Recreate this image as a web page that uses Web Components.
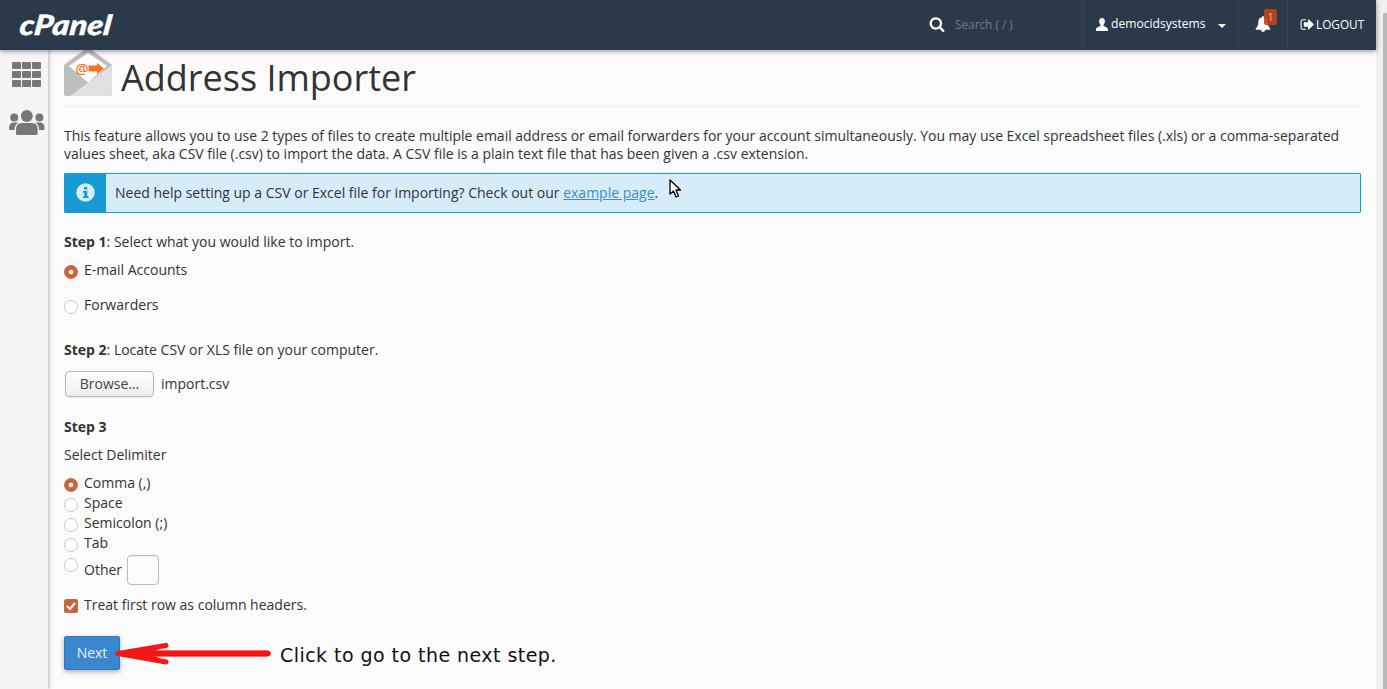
<!DOCTYPE html>
<html lang="en"><head><meta charset="utf-8"><title>Address Importer</title>
<style>
html,body{margin:0;padding:0;height:689px;overflow:hidden;background:#fafafa;font:14px/20px "Open Sans",sans-serif;color:#333}
</style></head><body>
<cp-app>
  <cp-row style="margin-top:19px"><b>Step 1</b>: Select what you would like to import.</cp-row>
  <cp-radio checked style="margin-top:8px">E-mail Accounts</cp-radio>
  <cp-radio style="margin-top:15px">Forwarders</cp-radio>
  <cp-row style="margin-top:25px"><b>Step 2</b>: Locate CSV or XLS file on your computer.</cp-row>
  <cp-file style="margin-top:11px" name="import.csv"></cp-file>
  <cp-row style="margin-top:20px"><b>Step 3</b></cp-row>
  <cp-row style="margin-top:8px">Select Delimiter</cp-row>
  <cp-radio checked style="margin-top:8px">Comma (,)</cp-radio>
  <cp-radio>Space</cp-radio>
  <cp-radio>Semicolon (;)</cp-radio>
  <cp-radio>Tab</cp-radio>
  <cp-radio other style="margin-top:2px">Other</cp-radio>
  <cp-check checked style="margin-top:10px">Treat first row as column headers.</cp-check>
  <cp-button style="margin-top:21px">Next</cp-button>
</cp-app>
<script>
const fa={
search:'<svg viewBox="0 0 1792 1792" width="16" height="16" fill="#fff"><path d="M1216 832q0-185-131.500-316.500t-316.500-131.500-316.500 131.500-131.500 316.500 131.500 316.500 316.500 131.500 316.500-131.500 131.500-316.500zm512 832q0 52-38 90t-90 38q-54 0-90-38l-343-342q-179 124-399 124-143 0-273.500-55.500t-225-150-150-225-55.500-273.500 55.500-273.500 150-225 225-150 273.500-55.500 273.500 55.500 225 150 150 225 55.500 273.500q0 220-124 399l343 343q37 37 37 90z"/></svg>',
user:'<svg viewBox="0 0 12 13" width="12" height="13" fill="#fff"><path d="M6 0C7.900 0 8.900 1.300 8.900 3.200C8.900 4.800 8.200 6 7.500 6.800V8C8.500 8.700 12 9.300 12 11.400V13H0V11.400C0 9.300 3.500 8.700 4.500 8V6.800C3.800 6 3.100 4.800 3.100 3.200C3.100 1.300 4.100 0 6 0Z"/></svg>',
bell:'<svg viewBox="0 0 1792 1792" width="16" height="16" fill="#fff"><path d="M912 1696q0-16-16-16-59 0-101.500-42.500t-42.500-101.500q0-16-16-16t-16 16q0 73 51.500 124.500t124.500 51.500q16 0 16-16zm816-288q0 52-38 90t-90 38h-448q0 106-75 181t-181 75-181-75-75-181h-448q-52 0-90-38t-38-90q50-42 91-88t85-119.500 74.500-158.500 50-206 19.500-260q0-152 117-282.500t307-158.500q-8-19-8-39 0-40 28-68t68-28 68 28 28 68q0 20-8 39 190 28 307 158.500t117 282.500q0 139 19.500 260t50 206 74.500 158.500 85 119.500 91 88z"/></svg>',
out:'<svg viewBox="0 0 1792 1792" width="15" height="15" fill="#fff"><path d="M704 1440q0 4 1 20t.5 26.500-3 23.500-10 19.500-20.500 6.500h-320q-119 0-203.500-84.500t-84.500-203.500v-704q0-119 84.500-203.500t203.500-84.500h320q13 0 22.500 9.500t9.500 22.500q0 4 1 20t.5 26.500-3 23.500-10 19.500-20.500 6.500h-320q-66 0-113 47t-47 113v704q0 66 47 113t113 47h312l11.500 1 11.500 3 8 5.500 7 9 2 13.500zm928-544q0 26-19 45l-544 544q-19 19-45 19t-45-19-19-45v-288h-448q-26 0-45-19t-19-45v-384q0-26 19-45t45-19h448v-288q0-26 19-45t45-19 45 19l544 544q19 19 19 45z"/></svg>',
users:'<svg viewBox="0 0 36 26" width="36" height="26" fill="#777"><circle cx="17.800" cy="6" r="6"/><circle cx="5.200" cy="7.500" r="4"/><circle cx="30.400" cy="7.500" r="4"/><path d="M7 23.500V19Q7 13 13 13H22.600Q28.600 13 28.600 19V23.500Q28.600 25 27 25H8.500Q7 25 7 23.500Z"/><path d="M0 18.500Q0 12.500 4.500 12.500H9.500Q5.500 14.500 5.400 20H1.200Q0 20 0 18.500Z"/><path d="M35.600 18.500Q35.600 12.500 31.100 12.500H26.100Q30.100 14.500 30.200 20H34.400Q35.600 20 35.600 18.500Z"/></svg>'
};
function def(name,html){
  customElements.define(name,class extends HTMLElement{
    constructor(){super();this.attachShadow({mode:'open'}).innerHTML=typeof html==='function'?html(this):html;}
  });
}
def('cp-header',`<style>
:host{display:flex;align-items:stretch;height:50px;background:#2a3a4b;color:#fff;box-shadow:0 1px 5px rgba(0,0,0,.45);position:relative;z-index:3;font:12px/20px "Open Sans",sans-serif}
.logo{font:italic 900 28px/48px Lato,sans-serif;margin-left:20px;letter-spacing:.1px;transform:scaleX(1.16) skewX(-6deg);transform-origin:0 50%;color:#fff;height:50px;-webkit-text-stroke:.4px #fff}
.sp{flex:1}
.search{display:flex;align-items:center;width:154px;box-sizing:border-box;padding-bottom:2px}
.search span{margin-left:10px;color:#727d88;font-size:11.800px}
.cell{display:flex;align-items:center;border-left:1px solid #34465a;box-sizing:border-box;padding-bottom:2px}
.user{width:155px;padding-left:12px}
.user span{margin-left:3px;font-size:12.100px}
.caret{width:0;height:0;border:4px solid transparent;border-top-color:#fff;border-bottom:0;margin-left:12px;margin-top:3px}
.bell{width:49px;padding-left:16px;position:relative}
.badge{position:absolute;left:25px;top:9px;width:13px;height:16px;background:rgba(190,68,22,.92);border-radius:2px;font-size:10px;line-height:16px;text-align:center;color:#d9c9c2}
.out{width:89px;padding-left:12px}
.out span{margin-left:1px;font-size:11.800px}
</style><div class="logo">cPanel</div><div class="sp"></div>
<div class="search">${fa.search}<span>Search ( / )</span></div>
<div class="cell user">${fa.user}<span>democidsystems</span><i class="caret"></i></div>
<div class="cell bell">${fa.bell}<div class="badge">1</div></div>
<div class="cell out">${fa.out}<span>LOGOUT</span></div>`);
def('cp-sidebar',`<style>
:host{display:flex;flex-direction:column;align-items:flex-start;width:48px;flex:none;background:#f5f5f5;box-shadow:1px 0 4px rgba(0,0,0,.28);position:relative;z-index:2;box-sizing:border-box;padding:12px 0 0 9px}
.grid{display:grid;grid-template-columns:repeat(3,8.500px);grid-auto-rows:7.300px;gap:1.700px;margin-left:3px}
.grid i{background:#777;border-radius:1px}
svg{margin-top:23px}
</style><div class="grid"><i></i><i></i><i></i><i></i><i></i><i></i><i></i><i></i><i></i></div>${fa.users}`);
def('cp-title',`<style>
:host{display:flex;height:56px;border-bottom:1px solid #eee;align-items:flex-start}
svg{flex:none}
h1{margin:0 0 0 9px;font:400 36px/56px "Open Sans",sans-serif;color:#333}
</style><svg width="48" height="46" viewBox="0 0 48 46">
<path d="M0 15L20 0H28L48 15V44Q48 46 46 46H2Q0 46 0 44Z" fill="#e0e0e0"/>
<path d="M0 15L20 0H28L48 15L24 32.500L6 46H2Q0 46 0 44Z" fill="#bdbdbd"/>
<path d="M5 16L24 3L43 16L24 32.500Z" fill="#fff"/>
<text x="11.500" y="23.500" font-family="Open Sans" font-size="14.500" stroke="#f47321" stroke-width=".25" fill="#f47321">@</text>
<path d="M24.500 15.500H33V13L40 18.500L33 24V21.500H24.500Z" fill="#f47321"/>
</svg><h1><slot></slot></h1>`);
def('cp-alert',`<style>
:host{display:flex;height:40px;box-sizing:border-box;border:1px solid #179bd7;background:#d6ecf9;margin-top:10px;border-radius:1px}
.ic{width:41px;flex:none;background:#179bd7;display:flex;align-items:center;justify-content:center;padding:0 1px 1px 0;box-sizing:border-box}
.t{padding-left:9px;line-height:37px}
::slotted(a){color:#428bca;text-decoration:underline}
</style><div class="ic"><svg width="19" height="19" viewBox="0 0 19 19"><circle cx="9.500" cy="9.500" r="9.200" fill="#d6ecf9"/><path d="M8 4h3.200v2.600H8zM7 8h4.200v5.300h1.300v1.700H7v-1.700h1.300V9.700H7z" fill="#179bd7"/></svg></div><div class="t"><slot></slot></div>`);
def('cp-row',`<style>:host{display:block;height:20px;line-height:20px}</style><slot></slot>`);
const ctlCss=`:host{display:flex;height:20px;line-height:20px}
input{appearance:none;-webkit-appearance:none;margin:0;flex:none;width:14px;height:14px;box-sizing:border-box;background:#fff;border:1px solid #c9c9c9}
label{margin-left:6px}`;
def('cp-radio',h=>`<style>${ctlCss}
input{border-radius:50%;margin-top:5px}
input:checked{background:radial-gradient(circle,#fff 0 2px,#cb6238 2.700px);border-color:#c66a45}
:host([other]){height:30px}
label{display:flex;align-items:center}
:host([other]) input{margin-top:3px}
:host([other]) label{height:30px}
.box{width:32px;height:30px;box-sizing:border-box;margin-left:5px;border:1px solid #bbb;border-radius:4px;background:#fcfcfc;box-shadow:inset 0 1px 1px rgba(0,0,0,.06)}
</style><input type="radio" tabindex="-1" ${h.hasAttribute('checked')?'checked':''}><label><span><slot></slot></span>${h.hasAttribute('other')?'<span class="box"></span>':''}</label>`);
def('cp-check',h=>`<style>${ctlCss}
.b{flex:none;width:14px;height:14px;margin-top:4px;background:#cb6238;border:1px solid #c66a45;border-radius:2px;box-sizing:border-box;display:block}
svg{display:block}
input{position:absolute;opacity:0;pointer-events:none;width:0;height:0;border:0}
</style><input type="checkbox" tabindex="-1" checked><span class="b"><svg width="12" height="12" viewBox="0 0 12 12"><path d="M2 6l3 3 5-6" fill="none" stroke="#fff" stroke-width="2"/></svg></span><label><slot></slot></label>`);
def('cp-file',h=>`<style>
:host{display:flex;align-items:center;height:26px;padding-left:1px}
button{width:89px;height:26px;box-sizing:border-box;border:1px solid #b5b5b5;border-radius:4px;background:linear-gradient(#fdfdfd,#eee);color:#444;font:14px/22px "Open Sans",sans-serif;padding:0;box-shadow:0 1px 1px rgba(0,0,0,.05)}
span{margin-left:7px}
</style><button tabindex="-1">Browse…</button><span>${h.getAttribute('name')}</span>`);
def('cp-button',`<style>
:host{display:block;width:56px;height:34px;box-sizing:border-box;background:#3b87cf;border:1px solid #2f78bd;border-radius:2px;color:#e8f1f9;text-align:center;line-height:32px;box-shadow:0 2px 5px rgba(0,0,0,.3)}
</style><slot></slot>`);
def('cp-annotation',`<style>
:host{display:block;position:absolute;left:110px;top:636px;width:470px;height:36px;z-index:1;pointer-events:none}
svg{position:absolute;left:0;top:0}
span{position:absolute;left:170px;top:7px;font:19px/24px "DejaVu Sans",sans-serif;letter-spacing:.45px;color:#111;white-space:nowrap}
</style><svg width="165" height="36" viewBox="0 0 165 36"><path d="M8 17.500L56 9L44 15H158V20H44L56 26Z" fill="#f41616" stroke="#f41616" stroke-width="1" stroke-linejoin="round"/><path d="M8 17.500L56 9.500M8 17.500L56 26" fill="none" stroke="#f41616" stroke-width="5" stroke-linecap="round"/><path d="M44 17.500H158" fill="none" stroke="#f41616" stroke-width="5.500" stroke-linecap="round"/></svg><span>Click to go to the next step.</span>`);
def('cp-cursor',`<style>:host{display:block;position:absolute;left:669px;top:179px;width:14px;height:20px;z-index:1}</style>
<svg width="14" height="20" viewBox="0 0 14 20"><path d="M1 1V15L4.500 12L7 18L9.500 17L7 11H11.500Z" fill="#fff" stroke="#000" stroke-width="1.300" stroke-linejoin="round"/></svg>`);
def('cp-app',`<style>
:host{display:flex;width:1387px;height:689px;position:relative;overflow:hidden}
.main{width:1376px;flex:none;display:flex;flex-direction:column}
.body{display:flex;flex:1;min-height:0}
.content{flex:1;padding:0 15px 0 16px;min-width:0;background:#fbfbfb}
p{margin:20px 0 0;line-height:18px}
p::first-line{word-spacing:-.08px}
.sb{flex:1;background:#f1f0ee;display:flex;justify-content:flex-end;padding-top:13px}
.sb i{width:4px;background:#b8b8b8;display:block;height:100%}
a{color:#428bca}
</style>
<div class="main"><cp-header></cp-header>
<div class="body"><cp-sidebar></cp-sidebar>
<div class="content"><cp-title>Address Importer</cp-title>
<p>This feature allows you to use 2 types of files to create multiple email address or email forwarders for your account simultaneously. You may use Excel spreadsheet files (.xls) or a comma-separated values sheet, aka CSV file (.csv) to import the data. A CSV file is a plain text file that has been given a .csv extension.</p>
<cp-alert>Need help setting up a CSV or Excel file for importing? Check out our <a href="#">example page</a>.</cp-alert>
<slot></slot></div></div></div>
<div class="sb"><i></i></div>
<cp-annotation></cp-annotation><cp-cursor></cp-cursor>`);
</script>
</body></html>
